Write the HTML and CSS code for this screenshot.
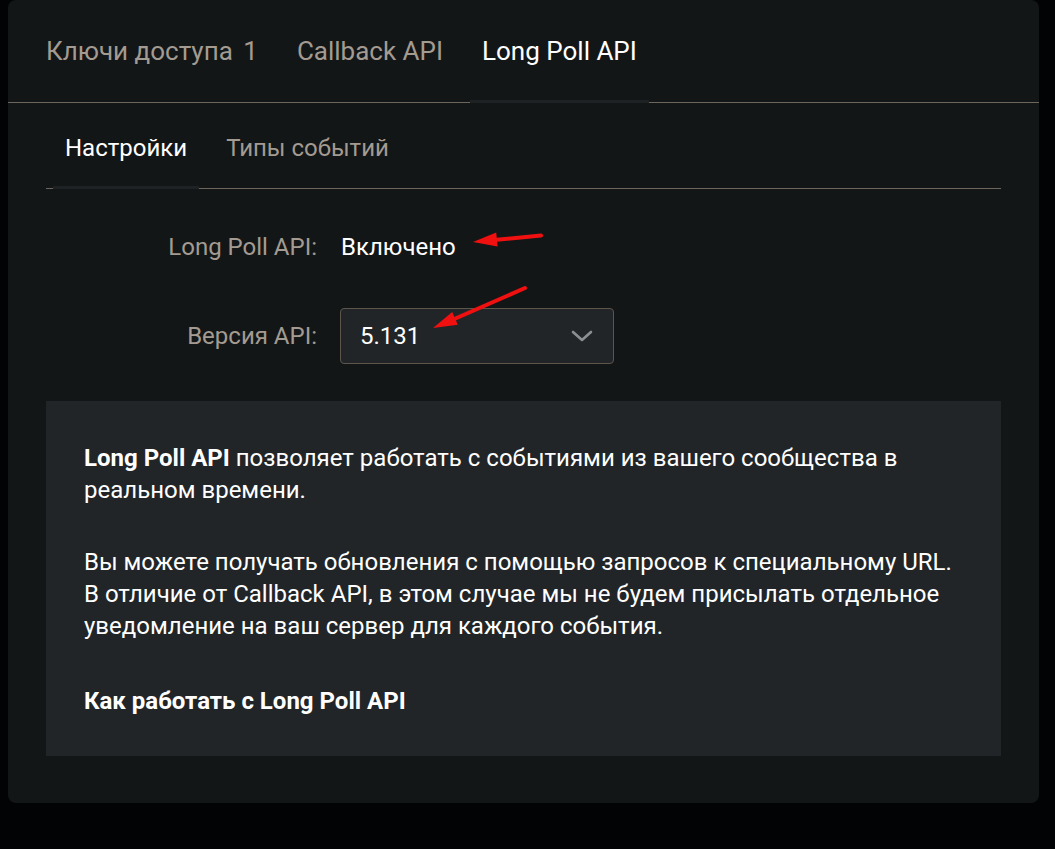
FILE: index.html
```html
<html>
<head>
	<title>Long Poll API</title>
	<meta charset="UTF-8" />
	<link rel="stylesheet" href="styles.css">
</head>
<body>
<div class="panel">
	<div class="tabs">
		<a class="tab" href="#keys">Ключи доступа <span class="count">1</span></a>
		<a class="tab" href="#callback">Callback API</a>
		<a class="tab active" href="#longpoll">Long Poll API</a>
	</div>

	<div class="content">
		<div class="subtabs">
			<a class="subtab active" href="#settings">Настройки</a>
			<a class="subtab" href="#events">Типы событий</a>
		</div>

		<div class="form">
			<div class="label">Long Poll API:</div>
			<div class="value">Включено</div>

			<div class="label">Версия API:</div>
			<div class="value">
				<div class="select">
					<span>5.131</span>
					<svg class="chevron" width="22" height="12" viewBox="0 0 22 12"><path d="M2 2 L11 10 L20 2" fill="none" stroke="#8c8f91" stroke-width="2.6" stroke-linecap="round" stroke-linejoin="round"/></svg>
				</div>
			</div>
		</div>

		<div class="info">
			<p><b>Long Poll API</b> позволяет работать с событиями из вашего сообщества в реальном времени.</p>
			<p>Вы можете получать обновления с помощью запросов к специальному URL.<br>
			В отличие от Callback API, в этом случае мы не будем присылать отдельное уведомление на ваш сервер для каждого события.</p>
			<p class="link"><a class="more" href="#docs">Как работать с Long Poll API</a></p>
		</div>
	</div>
</div>

<svg class="marks" width="1055" height="849" viewBox="0 0 1055 849">
	<line x1="541" y1="235.5" x2="494" y2="240" stroke="#f01010" stroke-width="4" stroke-linecap="round"/>
	<polygon points="473,242 496.2,232.6 497.6,246.6" fill="#f01010"/>
	<line x1="525" y1="288" x2="452" y2="320" stroke="#f01010" stroke-width="4" stroke-linecap="round"/>
	<polygon points="433,328 452.2,311.9 457.8,324.7" fill="#f01010"/>
</svg>
</body>
</html>
```

FILE: styles.css
```css
body {
	margin: 0;
	background: #020305;
	font-family: Roboto, "Liberation Sans", sans-serif;
	color: #fff;
}

a {
	text-decoration: none;
	color: inherit;
}

.panel {
	margin-left: 8px;
	width: 1031px;
	height: 803px;
	background: #131617;
	border-radius: 8px;
}

.tabs {
	display: flex;
	gap: 15px;
	padding-left: 26px;
	border-bottom: 1px solid #6d665c;
}

.tab {
	position: relative;
	padding: 0 12px;
	height: 102px;
	line-height: 102px;
	font-size: 26px;
	color: #a39b91;
}

.tab .count {
	margin-left: 4px;
}

.tab.active {
	color: #fff;
}

.tab.active::after {
	content: "";
	position: absolute;
	left: 0;
	right: 0;
	bottom: -1px;
	height: 3px;
	background: #1e2224;
}

.content {
	padding: 0 38px 46px;
}

.subtabs {
	display: flex;
	gap: 15px;
	padding-left: 7px;
	border-bottom: 1px solid #6d665c;
}

.subtab {
	position: relative;
	padding: 21px 12px 16px;
	line-height: 48px;
	font-size: 24px;
	color: #a39b91;
}

.subtab.active {
	color: #fff;
}

.subtab.active::after {
	content: "";
	position: absolute;
	left: 0;
	right: 0;
	bottom: -1px;
	height: 3px;
	background: #1e2224;
}

.form {
	display: grid;
	grid-template-columns: 271px 1fr;
	column-gap: 24px;
	row-gap: 33px;
	padding-top: 30px;
	align-items: center;
	font-size: 24px;
}

.label {
	text-align: right;
	color: #a39b91;
	line-height: 56px;
}

.value {
	color: #fff;
}

.select {
	display: flex;
	align-items: center;
	box-sizing: border-box;
	width: 274px;
	height: 56px;
	margin-left: -1px;
	padding: 0 20px 0 19px;
	background: #212528;
	border: 1px solid #5b554b;
	border-radius: 4px;
}

.chevron {
	margin-left: auto;
}

.info {
	margin-top: 37px;
	padding: 41px 38px 39px;
	background: #212528;
	font-size: 24px;
	line-height: 32px;
}

.info p {
	margin: 0 0 40px;
}

.info p.link {
	margin: 43px 0 0;
}

.more {
	font-weight: bold;
}

.marks {
	position: absolute;
	top: 0;
	left: 0;
	pointer-events: none;
}
```
